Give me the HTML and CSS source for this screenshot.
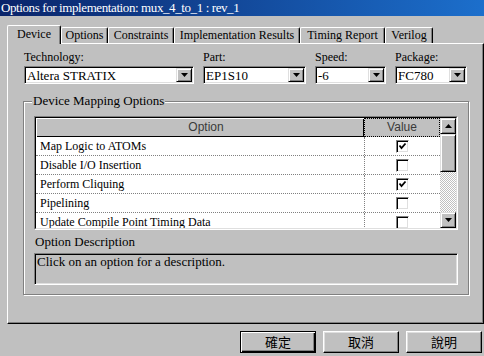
FILE: index.html
```html
<!DOCTYPE html>
<html>
<head>
<meta charset="utf-8">
<title>Options for implementation</title>
<link rel="stylesheet" href="styles.css">
</head>
<body>
<div class="window">
  <div class="titlebar">Options for implementation: mux_4_to_1 : rev_1</div>
  <div class="tabs">
    <div class="tab tab-device active">Device</div>
    <div class="tab tab-options">Options</div>
    <div class="tab tab-constraints">Constraints</div>
    <div class="tab tab-results">Implementation Results</div>
    <div class="tab tab-timing">Timing Report</div>
    <div class="tab tab-verilog">Verilog</div>
  </div>
  <div class="panel">
    <div class="fields">
      <div class="field f-tech">
        <label>Technology:</label>
        <div class="combo"><span class="combo-text">Altera STRATIX</span><span class="combo-btn"><svg width="7" height="4" viewBox="0 0 7 4"><path d="M0 0h7L3.5 4z" fill="#000"/></svg></span></div>
      </div>
      <div class="field f-part">
        <label>Part:</label>
        <div class="combo"><span class="combo-text">EP1S10</span><span class="combo-btn"><svg width="7" height="4" viewBox="0 0 7 4"><path d="M0 0h7L3.5 4z" fill="#000"/></svg></span></div>
      </div>
      <div class="field f-speed">
        <label>Speed:</label>
        <div class="combo"><span class="combo-text">-6</span><span class="combo-btn"><svg width="7" height="4" viewBox="0 0 7 4"><path d="M0 0h7L3.5 4z" fill="#000"/></svg></span></div>
      </div>
      <div class="field f-pkg">
        <label>Package:</label>
        <div class="combo"><span class="combo-text">FC780</span><span class="combo-btn"><svg width="7" height="4" viewBox="0 0 7 4"><path d="M0 0h7L3.5 4z" fill="#000"/></svg></span></div>
      </div>
    </div>

    <div class="group">
      <div class="legend">Device Mapping Options</div>
      <div class="list">
        <div class="list-inner">
          <div class="grid">
            <div class="row head">
              <div class="c-opt h-opt">Option</div>
              <div class="c-val h-val">Value</div>
            </div>
            <div class="row">
              <div class="c-opt">Map Logic to ATOMs</div>
              <div class="c-val"><span class="cb"><svg width="9" height="9" viewBox="0 0 9 9"><path d="M1.5 3.5L3.5 6L7.5 1.5" fill="none" stroke="#000" stroke-width="1.8"/></svg></span></div>
            </div>
            <div class="row">
              <div class="c-opt">Disable I/O Insertion</div>
              <div class="c-val"><span class="cb"></span></div>
            </div>
            <div class="row">
              <div class="c-opt">Perform Cliquing</div>
              <div class="c-val"><span class="cb"><svg width="9" height="9" viewBox="0 0 9 9"><path d="M1.5 3.5L3.5 6L7.5 1.5" fill="none" stroke="#000" stroke-width="1.8"/></svg></span></div>
            </div>
            <div class="row">
              <div class="c-opt">Pipelining</div>
              <div class="c-val"><span class="cb"></span></div>
            </div>
            <div class="row">
              <div class="c-opt">Update Compile Point Timing Data</div>
              <div class="c-val"><span class="cb"></span></div>
            </div>
          </div>
          <div class="vscroll">
            <div class="sb-btn"><svg width="7" height="4" viewBox="0 0 7 4"><path d="M0 4h7L3.5 0z" fill="#000"/></svg></div>
            <div class="sb-thumb"></div>
            <div class="sb-track"></div>
            <div class="sb-btn"><svg width="7" height="4" viewBox="0 0 7 4"><path d="M0 0h7L3.5 4z" fill="#000"/></svg></div>
          </div>
        </div>
      </div>
      <div class="desc-label">Option Description</div>
      <div class="desc">Click on an option for a description.</div>
    </div>
  </div>
  <div class="buttons">
    <button class="btn default">確定</button>
    <button class="btn">取消</button>
    <button class="btn">說明</button>
  </div>
</div>
</body>
</html>
```

FILE: styles.css
```css
* { box-sizing: border-box; }
html, body { margin: 0; padding: 0; }
body {
  background: #c0c0c0;
  font-family: "Liberation Serif", "Times New Roman", "DejaVu Serif", serif;
  font-size: 12px;
  color: #000;
}
.window {
  width: 484px;
  height: 356px;
  background: #c0c0c0;
  overflow: hidden;
  display: flex;
  flex-direction: column;
  font-family: "Liberation Serif", "Times New Roman", "DejaVu Serif", serif;
}
.titlebar {
  height: 16px;
  flex: none;
  background: linear-gradient(to right, #0a246a, #1c6fcc);
  color: #fff;
  font-size: 13px;
  letter-spacing: -0.4px;
  line-height: 16px;
  padding: 0 0 0 1px;
  white-space: nowrap;
}
.tabs {
  display: flex;
  align-items: flex-end;
  height: 18px;
  flex: none;
  margin-top: 9px;
  padding-left: 7px;
  position: relative;
  z-index: 1;
}
.tab {
  height: 16px;
  background: #c0c0c0;
  border-top: 1px solid #fff;
  border-left: 1px solid #fff;
  border-right: 1px solid #000;
  box-shadow: inset -1px 0 0 #808080;
  border-radius: 2px 2px 0 0;
  text-align: center;
  font-size: 12px;
  line-height: 14px;
  white-space: nowrap;
}
.tab.active {
  height: 19px;
  margin-bottom: -1px;
  padding-top: 1px;
}
.tab-device { width: 54px; }
.tab-options { width: 47px; }
.tab-constraints { width: 66px; }
.tab-results { width: 126px; }
.tab-timing { width: 85px; }
.tab-verilog { width: 48px; }

.panel {
  flex: none;
  margin-left: 7px;
  width: 477px;
  height: 281px;
  border: 1px solid;
  border-color: #fff #000 #000 #fff;
  box-shadow: inset -1px -1px 0 #808080;
  padding: 6px 0 0 16px;
  display: flex;
  flex-direction: column;
}
.fields { display: flex; gap: 9px; }
.field { display: flex; flex-direction: column; gap: 2px; }
.field label { line-height: 14px; font-size: 12px; }
.f-tech { width: 170px; }
.f-part { width: 103px; }
.f-speed { width: 71px; }
.f-pkg { width: 72px; }
.combo {
  height: 18px;
  background: #fff;
  border: 1px solid;
  border-color: #808080 #fff #fff #808080;
  box-shadow: inset 1px 1px 0 #000, inset -1px -1px 0 #dfdfdf;
  padding: 1px;
  display: flex;
}
.combo-text {
  flex: 1;
  font-size: 13px;
  line-height: 15px;
  padding-left: 1px;
  white-space: nowrap;
  overflow: hidden;
}
.combo-btn, .sb-btn {
  background: #c0c0c0;
  border: 1px solid;
  border-color: #dfdfdf #000 #000 #dfdfdf;
  box-shadow: inset 1px 1px 0 #fff, inset -1px -1px 0 #808080;
  display: flex;
  align-items: center;
  justify-content: center;
}
.combo-btn { width: 16px; height: 14px; }
.combo-btn svg, .sb-btn svg { display: block; }

.group {
  margin-top: 17px;
  margin-left: -1px;
  width: 446px;
  height: 194px;
  border: 1px solid #808080;
  box-shadow: inset 1px 1px 0 #fff, 1px 1px 0 #fff;
  display: flex;
  flex-direction: column;
}
.legend {
  align-self: flex-start;
  margin: -8px 0 0 8px;
  padding: 0 1px;
  background: #c0c0c0;
  font-size: 13px;
  line-height: 14px;
}
.list {
  margin: 8px 0 0 10px;
  width: 424px;
  height: 114px;
  border: 1px solid;
  border-color: #808080 #fff #fff #808080;
}
.list-inner {
  height: 100%;
  border: 1px solid;
  border-color: #000 #dfdfdf #dfdfdf #000;
  background: #fff;
  display: flex;
}
.grid { flex: 1; overflow: hidden; }
.row {
  display: flex;
  height: 19px;
  border-bottom: 1px dotted #808080;
}
.row.head {
  border-bottom: none;
  background: #c0c0c0;
}
.c-opt {
  width: 328px;
  padding-left: 4px;
  line-height: 18px;
  white-space: nowrap;
}
.c-val {
  flex: 1;
  border-left: 1px dotted #808080;
  display: flex;
  align-items: center;
  justify-content: center;
}
.h-opt, .h-val {
  font-family: "Liberation Sans", Arial, sans-serif;
  font-size: 12px;
  color: #3a3a3a;
  line-height: 19px;
  text-align: center;
}
.h-opt {
  padding-left: 12px;
  box-shadow: inset 1px 1px 0 #fff, inset -1px -1px 0 #000;
}
.h-val {
  border: 1px dotted #000;
  line-height: 17px;
}
.cb {
  width: 13px;
  height: 13px;
  background: #fff;
  border: 1px solid;
  border-color: #808080 #fff #fff #808080;
  box-shadow: inset 1px 1px 0 #000, inset -1px -1px 0 #dfdfdf;
  display: flex;
  align-items: center;
  justify-content: center;
}
.cb svg { display: block; }
.vscroll {
  width: 16px;
  display: flex;
  flex-direction: column;
}
.sb-btn { height: 16px; }
.sb-thumb {
  height: 38px;
  background: #c0c0c0;
  border: 1px solid;
  border-color: #dfdfdf #000 #000 #dfdfdf;
  box-shadow: inset 1px 1px 0 #fff, inset -1px -1px 0 #808080;
}
.sb-track {
  flex: 1;
  background: repeating-conic-gradient(#fff 0 25%, #c0c0c0 0 50%) 0 0 / 2px 2px;
}
.desc-label {
  margin: 5px 0 0 11px;
  font-size: 13px;
  line-height: 14px;
}
.desc {
  margin: 4px 0 0 10px;
  width: 424px;
  height: 32px;
  border: 1px solid;
  border-color: #808080 #fff #fff #808080;
  box-shadow: inset 1px 1px 0 #000, inset -1px -1px 0 #dfdfdf;
  padding: 2px;
  font-size: 13px;
  line-height: 12px;
}

.buttons {
  display: flex;
  justify-content: flex-end;
  gap: 7px;
  margin-top: 7px;
  padding-right: 2px;
}
.btn {
  width: 76px;
  height: 22px;
  padding: 0;
  font-family: "Noto Sans CJK TC", sans-serif;
  font-size: 13px;
  line-height: 18px;
  color: #000;
  background: #c0c0c0;
  border: 1px solid;
  border-color: #fff #000 #000 #fff;
  box-shadow: inset -1px -1px 0 #808080, inset 1px 1px 0 #dfdfdf;
}
.btn.default {
  border-color: #000;
  box-shadow: inset 1px 1px 0 #fff, inset -1px -1px 0 #000, inset -2px -2px 0 #808080;
}
```
